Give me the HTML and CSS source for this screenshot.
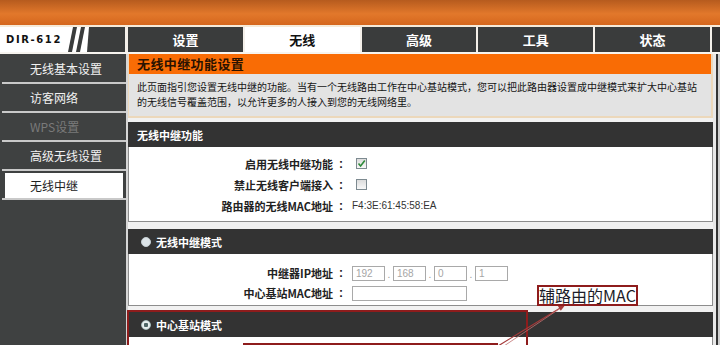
FILE: index.html
```html
<!DOCTYPE html>
<html lang="zh-CN">
<head>
<meta charset="utf-8">
<title>DIR-612 无线中继</title>
<link rel="stylesheet" href="styles.css">
</head>
<body>
<div class="page">
  <header class="topbar"></header>
  <nav class="nav">
    <div class="logo">
      <span class="model">DIR-612</span>
      <svg class="stripes" width="58" height="25" viewBox="0 0 58 25">
        <polygon points="1,25 5,25 10,0 6,0" fill="#3a3c3c"/>
        <polygon points="9,25 13,25 18,0 14,0" fill="#3a3c3c"/>
        <polygon points="20,25 58,25 58,0 22,0" fill="#3a3c3c"/>
      </svg>
    </div>
    <div class="tabs">
      <a class="tab">设置</a>
      <a class="tab tab-active">无线</a>
      <a class="tab">高级</a>
      <a class="tab">工具</a>
      <a class="tab">状态</a>
    </div>
    <div class="nav-end"></div>
  </nav>
  <div class="body">
    <aside class="sidebar">
      <ul class="menu">
        <li class="menu-item">无线基本设置</li>
        <li class="menu-item">访客网络</li>
        <li class="menu-item menu-disabled">WPS设置</li>
        <li class="menu-item">高级无线设置</li>
        <li class="menu-item menu-active"><span class="menu-active-box">无线中继</span></li>
      </ul>
    </aside>
    <main class="main">
      <section class="intro">
        <h1 class="intro-title">无线中继功能设置</h1>
        <p class="intro-text">此页面指引您设置无线中继的功能。当有一个无线路由工作在中心基站模式，您可以把此路由器设置成中继模式来扩大中心基站的无线信号覆盖范围，以允许更多的人接入到您的无线网络里。</p>
      </section>

      <section class="panel panel-func">
        <h2 class="panel-head">无线中继功能</h2>
        <div class="panel-body body-func">
          <div class="row">
            <span class="label">启用无线中继功能</span><span class="colon">:</span>
            <span class="check check-on"><svg width="9" height="9" viewBox="0 0 9 9"><path d="M1.5 4.5 L3.6 7 L7.8 1.5" fill="none" stroke="#2e8a3a" stroke-width="1.6"/></svg></span>
          </div>
          <div class="row">
            <span class="label">禁止无线客户端接入</span><span class="colon">:</span>
            <span class="check"></span>
          </div>
          <div class="row">
            <span class="label">路由器的无线MAC地址</span><span class="colon">:</span>
            <span class="mac">F4:3E:61:45:58:EA</span>
          </div>
        </div>
      </section>

      <section class="panel panel-mode">
        <h2 class="panel-head"><span class="radio"></span>无线中继模式</h2>
        <div class="panel-body body-mode">
          <div class="row row-mode">
            <span class="label">中继器IP地址</span><span class="colon">:</span>
            <span class="ip">
              <span class="field field-ip">192</span><span class="dot">.</span>
              <span class="field field-ip">168</span><span class="dot">.</span>
              <span class="field field-ip">0</span><span class="dot">.</span>
              <span class="field field-ip">1</span>
            </span>
          </div>
          <div class="row row-mode">
            <span class="label">中心基站MAC地址</span><span class="colon">:</span>
            <span class="field field-mac"></span>
          </div>
        </div>
      </section>

      <section class="panel panel-base">
        <h2 class="panel-head"><span class="radio radio-on"></span>中心基站模式</h2>
        <div class="panel-body body-base"></div>
      </section>
    </main>
    <div class="frame-right"></div>
  </div>

  <div class="mark mark-outer"></div>
  <div class="mark mark-inner"></div>
  <svg class="arrow" width="85" height="50" viewBox="0 0 85 50">
    <line x1="8" y1="50" x2="71" y2="11.5" stroke="#a53a3a" stroke-width="1.2"/>
    <line x1="14" y1="50" x2="70" y2="12.5" stroke="#c07070" stroke-width="0.8"/>
    <polygon points="76,8 70.8,14.8 67.6,9.6" fill="#a53a3a"/>
  </svg>
  <div class="note">辅路由的MAC</div>
</div>
</body>
</html>
```

FILE: styles.css
```css
* {
  box-sizing: border-box;
  margin: 0;
  padding: 0;
}

body {
  margin: 0;
  background: #fff;
  font-family: "Noto Sans CJK SC", "Noto Sans", sans-serif;
}

.page {
  position: relative;
  width: 720px;
  height: 345px;
  overflow: hidden;
  background: #3f4141;
}

/* top orange band */
.topbar {
  height: 25px;
  background: linear-gradient(#b65b1e, #e2782b 55%, #d5671d);
}

/* navigation row */
.nav {
  display: flex;
  height: 29px;
  border-top: 2px solid #f6ead8;
  border-bottom: 2px solid #f7f4ef;
  background: #f4f0ea;
}

.logo {
  width: 125px;
  display: flex;
  align-items: center;
  background: #fff;
}

.model {
  padding-left: 6px;
  font-family: "DejaVu Sans", sans-serif;
  font-weight: 700;
  font-size: 10px;
  letter-spacing: 1.6px;
  color: #111;
}

.stripes {
  margin-left: auto;
  display: block;
}

.tabs {
  display: flex;
  gap: 2px;
  width: 582px;
  margin-left: 3px;
}

.tab {
  flex: 1;
  display: flex;
  align-items: center;
  justify-content: center;
  background: #3a3c3c;
  color: #fff;
  font-size: 13px;
  font-weight: 700;
}

.tab-active {
  background: #fff;
  color: #111;
}

.nav-end {
  flex: 1;
  margin-left: 2px;
  background: #333;
}

/* body */
.body {
  display: flex;
  height: 291px;
}

.sidebar {
  width: 128px;
  background: #3f4141;
  border-right: 2px solid #d6d6d6;
}

.menu {
  list-style: none;
  padding-top: 1px;
}

.menu-item {
  height: 29px;
  margin-left: 2px;
  padding-left: 28px;
  border-bottom: 2px solid #c9c9c9;
  color: #f2f2f2;
  font-size: 12px;
  line-height: 27px;
}

.menu-disabled {
  color: #7a7a7a;
}

.menu-active {
  padding: 2px 3px 0 3px;
}

.menu-active-box {
  display: block;
  height: 25px;
  padding-left: 25px;
  background: #fff;
  color: #222;
  line-height: 25px;
}

.main {
  width: 585px;
  background: #f1f1f1;
}

.frame-right {
  flex: 1;
  background: linear-gradient(to right, #e8e8e8 0 3px, #333 3px 5px, #cfcfcf 5px);
}

/* intro block */
.intro {
  border: 2px solid #ecd8bb;
  border-top: 0;
  border-left-width: 1px;
}

.intro-title {
  height: 20px;
  padding-left: 8px;
  background: #f96c05;
  color: #2a1200;
  font-size: 13px;
  font-weight: 700;
  line-height: 20px;
  letter-spacing: 0.4px;
}

.intro-text {
  padding: 5px 7px 7px 8px;
  background: #e3e3e3;
  color: #141414;
  font-size: 10px;
  line-height: 15px;
}

/* panels */
.panel-func {
  margin-top: 4px;
}

.panel-mode {
  margin-top: 7px;
}

.panel-base {
  margin-top: 6px;
}

.panel-head {
  display: flex;
  align-items: center;
  gap: 5px;
  height: 25px;
  padding-left: 9px;
  background: #333;
  color: #fff;
  font-size: 11px;
  font-weight: 700;
}

.panel-mode .panel-head,
.panel-base .panel-head {
  padding-left: 13px;
}

.panel-body {
  background: #fff;
  border: 1px solid #8d8d8d;
  border-top: 0;
}

.body-func {
  padding: 6px 0 5px;
}

.body-mode {
  padding: 9px 0 2px;
}

.body-base {
  height: 30px;
}

.row {
  display: grid;
  grid-template-columns: 204px 19px 1fr;
  align-items: center;
  height: 21px;
}

.row-mode {
  height: 20px;
}

.label {
  text-align: right;
  color: #222;
  font-size: 11px;
  font-weight: 700;
}

.colon {
  padding-left: 6px;
  color: #222;
  font-family: "Liberation Sans", sans-serif;
  font-size: 12px;
  font-weight: 700;
}

.check {
  display: flex;
  align-items: center;
  justify-content: center;
  width: 11px;
  height: 11px;
  margin-left: 4px;
  border: 1px solid #7d8a90;
  background: linear-gradient(#dcdcdc, #f8f8f8);
}

.mac {
  font-family: "Liberation Sans", sans-serif;
  font-size: 10px;
  color: #333;
}

.ip {
  display: flex;
  align-items: flex-end;
}

.field {
  display: block;
  height: 15px;
  border: 1px solid #a9a9a9;
  background: #fff;
  padding-left: 3px;
  font-family: "Liberation Sans", sans-serif;
  font-size: 10px;
  line-height: 13px;
  color: #a5a5a5;
}

.field-ip {
  width: 33px;
}

.field-mac {
  width: 115px;
}

.dot {
  width: 8px;
  text-align: center;
  font-family: "Liberation Sans", sans-serif;
  font-size: 10px;
  line-height: 12px;
  color: #999;
}

.radio {
  width: 10px;
  height: 10px;
  border-radius: 50%;
  background: #dde4e8;
  border: 1px solid #c5ced2;
}

.radio-on {
  background: radial-gradient(circle, #4d6666 0 2px, #e6eeee 2.5px);
  border-color: #a9c0c0;
}

/* annotation overlay */
.mark {
  position: absolute;
  border: 2px solid #8e1c1c;
}

.mark-outer {
  left: 127px;
  top: 310px;
  width: 401px;
  height: 50px;
}

.mark-inner {
  left: 243px;
  top: 343px;
  width: 255px;
  height: 20px;
}

.arrow {
  position: absolute;
  left: 490px;
  top: 296px;
}

.note {
  position: absolute;
  left: 537px;
  top: 285px;
  width: 101px;
  height: 21px;
  border: 2px solid #8e1c1c;
  background: #fff;
  color: #1c1c28;
  font-size: 16px;
  line-height: 17px;
  text-align: center;
  white-space: nowrap;
}
```
